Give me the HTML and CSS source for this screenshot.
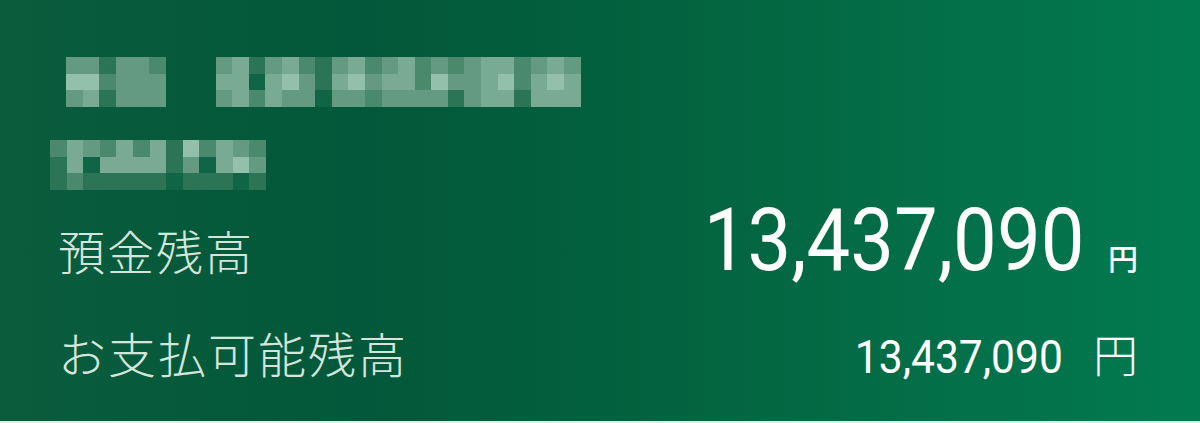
FILE: index.html
```html
<!DOCTYPE html>
<html lang="ja">
<head>
<meta charset="utf-8">
<title>残高</title>
<link rel="stylesheet" href="styles.css">
</head>
<body>
<div class="card">
  <div class="masked row-one">
    <div class="mosaic">
      <i class="s3"></i><i class="s5"></i><i class="s3"></i>
      <i class="s3"></i><i class="s5"></i><i class="s4"></i>
      <i class="s1"></i><i class="s2"></i><i class="s1"></i>
      <i class="s3"></i><i class="s3"></i><i class="s3"></i>
      <i class="s3"></i><i class="s3"></i><i class="s3"></i>
      <i class="s2"></i><i class="s3"></i><i class="s3"></i>
    </div>
    <div class="mosaic">
      <i class="s3"></i><i class="s4"></i><i class="s3"></i>
      <i class="s4"></i><i class="s4"></i><i class="s4"></i>
      <i class="s1"></i><i class="s0"></i><i class="s2"></i>
      <i class="s3"></i><i class="s4"></i><i class="s4"></i>
      <i class="s4"></i><i class="s5"></i><i class="s3"></i>
      <i class="s2"></i><i class="s3"></i><i class="s3"></i>
      <i class="s1"></i><i class="s1"></i><i class="s0"></i>
      <i class="s3"></i><i class="s4"></i><i class="s3"></i>
      <i class="s4"></i><i class="s5"></i><i class="s3"></i>
      <i class="s2"></i><i class="s3"></i><i class="s2"></i>
      <i class="s3"></i><i class="s4"></i><i class="s3"></i>
      <i class="s4"></i><i class="s4"></i><i class="s3"></i>
      <i class="s2"></i><i class="s2"></i><i class="s3"></i>
      <i class="s3"></i><i class="s5"></i><i class="s3"></i>
      <i class="s2"></i><i class="s3"></i><i class="s1"></i>
      <i class="s3"></i><i class="s3"></i><i class="s3"></i>
      <i class="s4"></i><i class="s4"></i><i class="s4"></i>
      <i class="s4"></i><i class="s5"></i><i class="s4"></i>
      <i class="s2"></i><i class="s2"></i><i class="s1"></i>
      <i class="s3"></i><i class="s4"></i><i class="s4"></i>
      <i class="s4"></i><i class="s5"></i><i class="s4"></i>
      <i class="s3"></i><i class="s4"></i><i class="s4"></i>
    </div>
  </div>
  <div class="masked row-two">
    <div class="mosaic">
      <i class="s2"></i><i class="s1"></i><i class="s1"></i>
      <i class="s4"></i><i class="s4"></i><i class="s2"></i>
      <i class="s3"></i><i class="s0"></i><i class="s1"></i>
      <i class="s2"></i><i class="s4"></i><i class="s1"></i>
      <i class="s4"></i><i class="s4"></i><i class="s1"></i>
      <i class="s2"></i><i class="s4"></i><i class="s1"></i>
      <i class="s4"></i><i class="s4"></i><i class="s1"></i>
      <i class="s1"></i><i class="s1"></i><i class="s0"></i>
      <i class="s5"></i><i class="s3"></i><i class="s1"></i>
      <i class="s2"></i><i class="s0"></i><i class="s1"></i>
      <i class="s4"></i><i class="s4"></i><i class="s1"></i>
      <i class="s3"></i><i class="s5"></i><i class="s0"></i>
      <i class="s2"></i><i class="s3"></i><i class="s1"></i>
    </div>
  </div>
  <div class="balance main">
    <span class="label">預金残高</span>
    <span class="amount"><span class="num">13,437,090</span><span class="yen">円</span></span>
  </div>
  <div class="balance sub">
    <span class="label">お支払可能残高</span>
    <span class="amount"><span class="num">13,437,090</span><span class="yen">円</span></span>
  </div>
</div>
</body>
</html>
```

FILE: styles.css
```css
html, body {
  margin: 0;
  padding: 0;
}
body {
  width: 1200px;
  height: 423px;
  background: #dcefe7;
  overflow: hidden;
}
.card {
  box-sizing: border-box;
  width: 1200px;
  height: 421px;
  padding: 57px 62px 0 58px;
  background: linear-gradient(90deg, #0a5c3d 0%, #02583a 30%, #03623f 55%, #036f48 78%, #027a50 100%);
  display: flex;
  flex-direction: column;
  font-family: "Noto Sans CJK JP", "Noto Sans", sans-serif;
}
.masked {
  display: flex;
}
.row-one {
  margin-left: 8px;
  gap: 50px;
}
.row-two {
  margin-top: 33px;
  margin-left: -8px;
}
.mosaic {
  display: grid;
  grid-template-rows: repeat(3, 16.67px);
  grid-auto-flow: column;
  grid-auto-columns: 16.6px;
}
.mosaic i {
  display: block;
}
.s0 { background: #0f6546; }
.s1 { background: #2b7455; }
.s2 { background: #4a896c; }
.s3 { background: #639a81; }
.s4 { background: #79ab94; }
.s5 { background: #93c0aa; }

.balance {
  display: flex;
  justify-content: space-between;
  align-items: baseline;
}
.label {
  color: #d4e5dc;
  font-weight: 300;
  letter-spacing: 2px;
}
.amount {
  color: #ffffff;
  font-family: Roboto, "Noto Sans CJK JP", sans-serif;
  display: flex;
  align-items: baseline;
}
.num {
  display: inline-block;
  transform-origin: right bottom;
}
.main {
  margin-top: 7px;
  height: 86px;
}
.main .label {
  font-size: 47px;
}
.main .num {
  font-size: 87px;
  line-height: 86px;
  transform: scaleX(0.895);
}
.main .yen {
  font-family: "Noto Sans CJK JP", sans-serif;
  font-size: 30px;
  font-weight: 500;
  margin-left: 24px;
}
.sub {
  margin-top: 34px;
}
.sub .label {
  font-size: 48px;
}
.sub .num {
  font-size: 47px;
  transform: scaleX(0.905);
}
.sub .yen {
  font-family: "Noto Sans CJK JP", sans-serif;
  font-size: 45px;
  font-weight: 300;
  margin-left: 30px;
}
```
